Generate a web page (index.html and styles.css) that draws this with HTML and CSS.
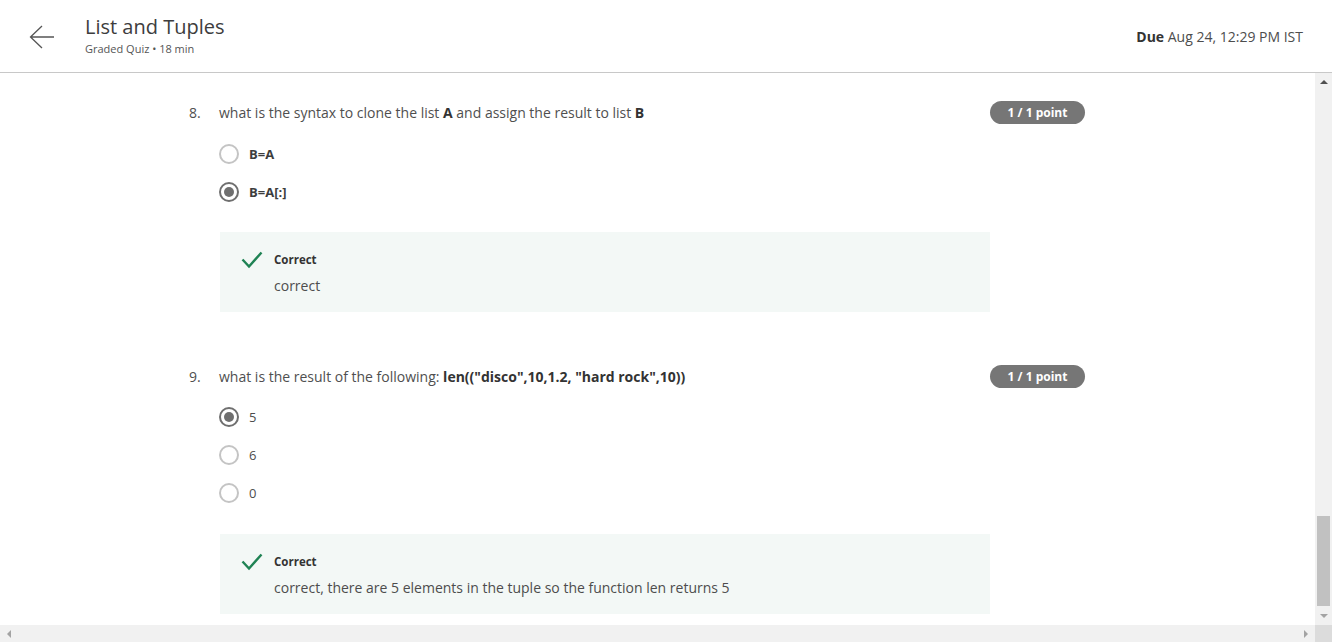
FILE: index.html
```html
<!DOCTYPE html>
<html lang="en">
<head>
<meta charset="utf-8">
<title>List and Tuples</title>
<link rel="stylesheet" href="styles.css">
</head>
<body>
<header class="header">
  <div class="back">
    <svg width="26" height="24" viewBox="0 0 26 24"><path d="M13 1 L1.5 12 L13 23 M1.5 12 H25" fill="none" stroke="#555" stroke-width="1.3"/></svg>
  </div>
  <div class="titles">
    <div class="title">List and Tuples</div>
    <div class="subtitle">Graded Quiz • 18 min</div>
  </div>
  <div class="due"><b>Due</b> Aug 24, 12:29 PM IST</div>
</header>
<div class="viewport">
  <main class="main">
    <section class="question">
      <div class="q-row">
        <span class="q-num">8.</span>
        <span class="q-text">what is the syntax to clone the list <b>A</b> and assign the result to list <b>B</b></span>
        <span class="badge">1 / 1 point</span>
      </div>
      <ul class="options">
        <li class="option"><span class="radio"></span><span class="opt-label bold">B=A</span></li>
        <li class="option"><span class="radio checked"></span><span class="opt-label bold">B=A[:]</span></li>
      </ul>
      <div class="feedback">
        <svg class="check" width="22" height="18" viewBox="0 0 22 18"><path d="M1.5 8.5 L8 15.5 L20.5 1.5" fill="none" stroke="#1f8354" stroke-width="2.4"/></svg>
        <div class="fb-body">
          <div class="fb-title">Correct</div>
          <div class="fb-text">correct</div>
        </div>
      </div>
    </section>
    <section class="question q2">
      <div class="q-row">
        <span class="q-num">9.</span>
        <span class="q-text">what is the result of the following: <b>len(("disco",10,1.2, "hard rock",10))</b></span>
        <span class="badge">1 / 1 point</span>
      </div>
      <ul class="options">
        <li class="option"><span class="radio checked"></span><span class="opt-label">5</span></li>
        <li class="option"><span class="radio"></span><span class="opt-label">6</span></li>
        <li class="option"><span class="radio"></span><span class="opt-label">0</span></li>
      </ul>
      <div class="feedback">
        <svg class="check" width="22" height="18" viewBox="0 0 22 18"><path d="M1.5 8.5 L8 15.5 L20.5 1.5" fill="none" stroke="#1f8354" stroke-width="2.4"/></svg>
        <div class="fb-body">
          <div class="fb-title">Correct</div>
          <div class="fb-text">correct, there are 5 elements in the tuple so the function len returns 5</div>
        </div>
      </div>
    </section>
  </main>
  <div class="vscroll">
    <span class="arrow-up"></span>
    <div class="track"><div class="thumb"></div></div>
    <span class="arrow-down"></span>
  </div>
  <div class="hscroll">
    <span class="arrow-left"></span>
    <span class="arrow-right"></span>
  </div>
  <div class="corner"></div>
</div>
</body>
</html>
```

FILE: styles.css
```css
* { box-sizing: border-box; }
html, body { margin: 0; padding: 0; }
body {
  width: 1332px;
  height: 642px;
  overflow: hidden;
  font-family: "Open Sans", "Noto Sans", sans-serif;
  color: #4d4d4d;
  background: #fff;
}
.header {
  height: 73px;
  border-bottom: 1px solid #c8c8c8;
  display: flex;
  align-items: center;
  padding-right: 29px;
}
.back {
  width: 85px;
  padding-left: 29px;
  display: flex;
  align-items: center;
  padding-top: 1px;
}
.back svg { display: block; }
.titles { display: flex; flex-direction: column; margin-top: -1px; }
.title {
  font-size: 20px;
  line-height: 26px;
  color: #3d3d3d;
}
.subtitle {
  font-size: 11px;
  line-height: 16px;
  color: #555;
  margin-top: 1px;
}
.due {
  margin-left: auto;
  font-size: 14px;
  color: #4d4d4d;
}
.due b { color: #333; font-weight: 700; }

.viewport {
  height: 569px;
  display: grid;
  grid-template-columns: 1fr 17px;
  grid-template-rows: 1fr 17px;
}
.main {
  padding: 28px 0 0 189px;
  overflow: hidden;
}
.question { width: 896px; }
.q2 { margin-top: 53px; }
.q-row {
  display: flex;
  align-items: center;
  height: 23px;
  font-size: 14px;
  color: #4f4f4f;
}
.q-num { width: 30px; }
.q-text b { color: #333; font-weight: 700; }
.badge {
  margin-left: auto;
  width: 95px;
  height: 23px;
  border-radius: 12px;
  background: #767676;
  color: #fff;
  font-size: 12px;
  font-weight: 700;
  display: flex;
  align-items: center;
  justify-content: center;
}
.options {
  list-style: none;
  margin: 11px 0 0 30px;
  padding: 0;
}
.q2 .options { margin-top: 10px; }
.option {
  height: 38px;
  display: flex;
  align-items: center;
}
.radio {
  width: 20px;
  height: 20px;
  border-radius: 50%;
  border: 2px solid #c4c4c4;
  display: flex;
  align-items: center;
  justify-content: center;
  flex-shrink: 0;
}
.radio.checked { border-color: #6f6f6f; }
.radio.checked::after {
  content: "";
  width: 10px;
  height: 10px;
  border-radius: 50%;
  background: #6f6f6f;
}
.opt-label {
  margin-left: 10px;
  font-size: 13px;
  color: #4d4d4d;
}
.opt-label.bold { font-weight: 700; color: #3d3d3d; }
.feedback {
  margin: 21px 95px 0 31px;
  height: 80px;
  background: #f3f8f6;
  display: flex;
  align-items: flex-start;
  padding: 20px 0 0 21px;
}
.q2 .feedback { margin-top: 22px; }
.check { margin-top: -1px; flex-shrink: 0; }
.fb-body { margin-left: 11px; }
.fb-title {
  font-size: 11.5px;
  line-height: 16px;
  font-weight: 700;
  color: #333;
}
.fb-text {
  margin-top: 8px;
  font-size: 14px;
  line-height: 20px;
  color: #4d4d4d;
}

.vscroll {
  background: #f1f1f1;
  display: flex;
  flex-direction: column;
  align-items: center;
}
.arrow-up {
  margin-top: 7px;
  width: 0; height: 0;
  border-left: 4px solid transparent;
  border-right: 4px solid transparent;
  border-bottom: 4px solid #505050;
}
.track {
  flex: 1;
  width: 100%;
  position: relative;
}
.thumb {
  position: absolute;
  left: 2px; right: 2px;
  top: 432px;
  height: 90px;
  background: #c1c1c1;
}
.arrow-down {
  margin-bottom: 7px;
  width: 0; height: 0;
  border-left: 4px solid transparent;
  border-right: 4px solid transparent;
  border-top: 4px solid #a3a3a3;
}
.hscroll {
  background: #f1f1f1;
  display: flex;
  align-items: center;
  justify-content: space-between;
  padding: 0 7px;
}
.arrow-left {
  width: 0; height: 0;
  border-top: 4px solid transparent;
  border-bottom: 4px solid transparent;
  border-right: 4px solid #a3a3a3;
}
.arrow-right {
  width: 0; height: 0;
  border-top: 4px solid transparent;
  border-bottom: 4px solid transparent;
  border-left: 4px solid #a3a3a3;
}
.corner { background: #dcdcdc; }
```
